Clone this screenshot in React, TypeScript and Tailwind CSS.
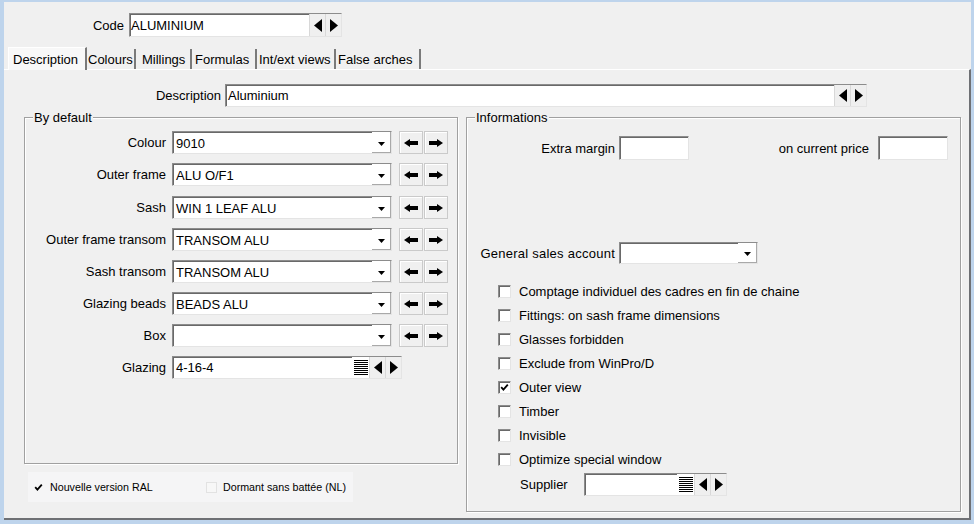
import React from 'react';

const sunken =
  'border border-t-[#8c8c8c] border-l-[#8c8c8c] border-r-[#e4e4e4] border-b-[#e4e4e4] shadow-[inset_1px_1px_0_#696969] bg-white';

const TriLeft = () => (
  <svg width="8" height="13" viewBox="0 0 8 13">
    <polygon points="8,0 0,6.5 8,13" fill="#000" />
  </svg>
);

const TriRight = () => (
  <svg width="8" height="13" viewBox="0 0 8 13">
    <polygon points="0,0 8,6.5 0,13" fill="#000" />
  </svg>
);

const TriDown = () => (
  <svg width="7" height="4" viewBox="0 0 7 4">
    <polygon points="0,0 7,0 3.5,4" fill="#000" />
  </svg>
);

const ListIcon = () => (
  <svg width="14" height="15" viewBox="0 0 14 15">
    {[0, 2, 4, 6, 8, 10, 12, 14].map((y) => (
      <rect key={y} x="0" y={y} width="14" height="1" fill="#000" />
    ))}
  </svg>
);

const ArrowLeft = () => (
  <svg width="14" height="8" viewBox="0 0 14 8">
    <polygon points="0,4 6,0 6,2 14,2 14,6 6,6 6,8" fill="#000" />
  </svg>
);

const ArrowRight = () => (
  <svg width="14" height="8" viewBox="0 0 14 8">
    <polygon points="14,4 8,0 8,2 0,2 0,6 8,6 8,8" fill="#000" />
  </svg>
);

const CheckMark = () => (
  <svg width="9" height="9" viewBox="0 0 9 9">
    <polyline points="1.2,4.2 3.4,6.6 7.8,1.6" fill="none" stroke="#000" strokeWidth="1.8" />
  </svg>
);

interface NavFieldProps {
  value?: string;
  className: string;
  list?: boolean;
  textPad?: string;
}

const NavField: React.FC<NavFieldProps> = ({ value = '', className, list = false, textPad = 'pl-[1px]' }) => (
  <div className={`flex ${sunken} ${className}`}>
    <span className={`flex-1 flex items-center whitespace-nowrap overflow-hidden ${textPad}`}>{value}</span>
    {list && (
      <span className="w-[17px] flex items-center justify-center bg-white">
        <ListIcon />
      </span>
    )}
    <span className="w-[16px] flex items-center justify-center bg-[#efefef] border-l border-[#d8d8d8]">
      <TriLeft />
    </span>
    <span className="w-[16px] flex items-center justify-center bg-[#efefef] border-l border-[#d8d8d8]">
      <TriRight />
    </span>
  </div>
);

const Select: React.FC<{ value?: string; className: string }> = ({ value = '', className }) => (
  <div className={`flex ${sunken} ${className}`}>
    <span className="flex-1 flex items-center pl-[3px] pt-[2px] whitespace-nowrap">{value}</span>
    <span className="w-[19px] flex items-end justify-center pb-[6px] bg-white border-r border-b border-[#a9a9a9]">
      <TriDown />
    </span>
  </div>
);

const ArrowBtn: React.FC<{ dir: 'left' | 'right' }> = ({ dir }) => (
  <div className="w-[24px] h-[23px] bg-[#f0f0f0] border border-[#cacaca] shadow-[inset_1px_1px_0_#fff] flex items-center justify-center">
    {dir === 'left' ? <ArrowLeft /> : <ArrowRight />}
  </div>
);

const CheckRow: React.FC<{ label: string; checked?: boolean }> = ({ label, checked }) => (
  <div className="h-[24px] flex items-center">
    <span className={`w-[13px] h-[13px] flex items-center justify-center ${sunken}`}>
      {checked && <CheckMark />}
    </span>
    <span className="ml-[8px] whitespace-nowrap">{label}</span>
  </div>
);

const GroupBox: React.FC<{ title: string; className: string; children: React.ReactNode }> = ({
  title,
  className,
  children,
}) => (
  <div className={`relative border border-[#a0a0a0] shadow-[inset_1px_1px_0_#fff,1px_1px_0_#fff] ${className}`}>
    <span className="absolute -top-[8px] left-[8px] px-[1px] bg-[#f0f0f0] leading-[15px]">{title}</span>
    {children}
  </div>
);

// mt per row: the gap after "Outer frame" is one pixel wider in the original
const defaults = [
  { label: 'Colour', value: '9010', mt: '' },
  { label: 'Outer frame', value: 'ALU O/F1', mt: 'mt-[9px]' },
  { label: 'Sash', value: 'WIN 1 LEAF ALU', mt: 'mt-[10px]' },
  { label: 'Outer frame transom', value: 'TRANSOM ALU', mt: 'mt-[9px]' },
  { label: 'Sash transom', value: 'TRANSOM ALU', mt: 'mt-[9px]' },
  { label: 'Glazing beads', value: 'BEADS ALU', mt: 'mt-[9px]' },
  { label: 'Box', value: '', mt: 'mt-[9px]' },
];

const options = [
  { label: 'Comptage individuel des cadres en fin de chaine' },
  { label: 'Fittings: on sash frame dimensions' },
  { label: 'Glasses forbidden' },
  { label: 'Exclude from WinPro/D' },
  { label: 'Outer view', checked: true },
  { label: 'Timber' },
  { label: 'Invisible' },
  { label: 'Optimize special window' },
];

const tabs = [
  { name: 'Description', cls: 'w-[79px] pl-[4px]' },
  { name: 'Colours', cls: 'w-[49px] pl-[1px]' },
  { name: 'Millings', cls: 'w-[56px] pl-[6px]' },
  { name: 'Formulas', cls: 'w-[65px] pl-[3px]' },
  { name: 'Int/ext views', cls: 'w-[79px] pl-[2px]' },
  { name: 'False arches', cls: 'w-[85px] pl-[2px]' },
];

export default function App() {
  return (
    <div className="w-[974px] h-[524px] bg-[#bed4ec] pl-[4px] pt-[2px] overflow-hidden font-['Liberation_Sans',Arial,sans-serif] text-[13px] leading-[15px] text-black">
      <div className="w-[967px] h-[518px] bg-[#f0f0f0] flex flex-col">
        {/* Code */}
        <div className="mt-[11px] h-[24px] flex items-center">
          <span className="w-[120px] text-right">Code</span>
          <NavField className="ml-[5px] w-[213px] h-[24px]" value="ALUMINIUM" />
        </div>

        {/* Tabs */}
        <div className="mt-[11px] h-[22px] pl-[4px] flex items-end relative z-10 -mb-[1px]">
          {tabs.map((t, i) => (
            <div
              key={t.name}
              className={`${t.cls} flex items-center border-r-2 border-r-[#7a7a7a] whitespace-nowrap ${
                i === 0 ? 'h-[23px] bg-[#f8f8f8] border-l border-t border-l-white border-t-white' : 'h-[20px] mb-[1px]'
              }`}
            >
              {t.name}
            </div>
          ))}
        </div>

        {/* Tab page */}
        <div className="flex-1 border-t border-t-white border-r-2 border-b-2 border-r-[#6e7074] border-b-[#6e7074] flex flex-col">
          <div className="mt-[14px] h-[23px] flex items-center">
            <span className="w-[217px] text-right">Description</span>
            <NavField className="ml-[4px] w-[642px] h-[23px]" value="Aluminium" textPad="pl-[2px]" />
          </div>

          <div className="mt-[10px] pl-[20px] flex items-start">
            {/* Left column */}
            <div className="w-[434px] flex flex-col">
              <GroupBox title="By default" className="w-[434px] h-[347px]">
                <div className="pt-[13px] flex flex-col">
                  {defaults.map((d) => (
                    <div key={d.label} className={`h-[23px] flex items-center ${d.mt}`}>
                      <span className="w-[141px] text-right whitespace-nowrap">{d.label}</span>
                      <Select className="ml-[6px] w-[220px] h-[23px]" value={d.value} />
                      <div className="ml-[7px] flex gap-[1px]">
                        <ArrowBtn dir="left" />
                        <ArrowBtn dir="right" />
                      </div>
                    </div>
                  ))}
                  <div className="mt-[9px] h-[23px] flex items-center">
                    <span className="w-[141px] text-right">Glazing</span>
                    <NavField className="ml-[6px] w-[230px] h-[23px]" value="4-16-4" list textPad="pl-[3px]" />
                  </div>
                </div>
              </GroupBox>

              <div className="mt-[8px] ml-[4px] w-[325px] h-[30px] bg-[#f5f5f6] flex items-center text-[10.7px]">
                <div className="w-[178px] pl-[5px] flex items-center">
                  <span className="w-[11px] h-[11px] flex items-center justify-center">
                    <CheckMark />
                  </span>
                  <span className="ml-[6px] whitespace-nowrap">Nouvelle version RAL</span>
                </div>
                <div className="flex items-center">
                  <span className="w-[11px] h-[11px] border border-[#e2e2e2] bg-[#f7f7f7]" />
                  <span className="ml-[6px] whitespace-nowrap">Dormant sans battée (NL)</span>
                </div>
              </div>
            </div>

            {/* Right column */}
            <GroupBox title="Informations" className="ml-[8px] w-[495px] h-[395px]">
              <div className="pt-[18px] flex flex-col">
                <div className="h-[24px] flex items-center">
                  <span className="w-[148px] text-right">Extra margin</span>
                  <div className={`ml-[4px] w-[70px] h-[24px] ${sunken}`} />
                  <span className="w-[180px] text-right">on current price</span>
                  <div className={`ml-[9px] w-[70px] h-[24px] ${sunken}`} />
                </div>

                <div className="mt-[82px] h-[22px] flex items-center">
                  <span className="w-[148px] text-right whitespace-nowrap tracking-[0.25px]">General sales account</span>
                  <Select className="ml-[4px] w-[139px] h-[22px]" />
                </div>

                <div className="mt-[15px] pl-[31px] flex flex-col">
                  {options.map((o) => (
                    <CheckRow key={o.label} label={o.label} checked={o.checked} />
                  ))}
                </div>

                <div className="mt-[2px] pl-[53px] h-[23px] flex items-center">
                  <span className="w-[64px]">Supplier</span>
                  <NavField className="w-[143px] h-[23px]" list />
                </div>
              </div>
            </GroupBox>
          </div>
        </div>
      </div>
    </div>
  );
}
